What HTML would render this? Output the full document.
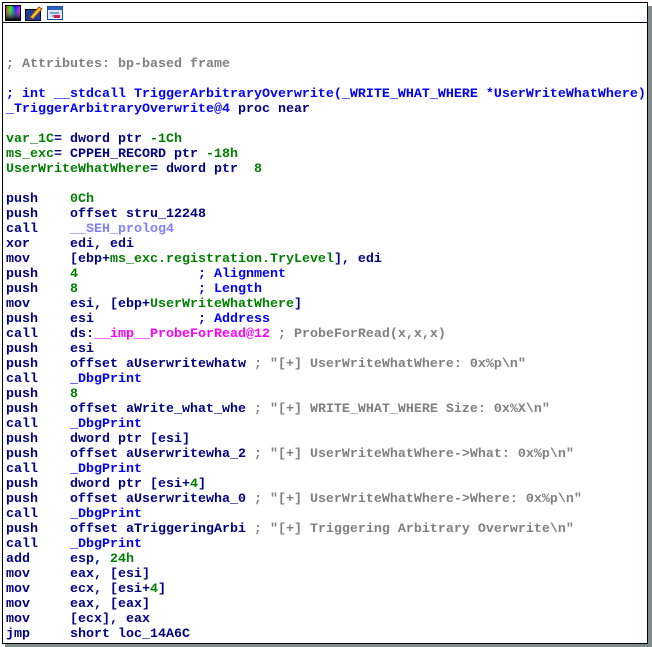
<!DOCTYPE html>
<html><head><meta charset="utf-8"><style>
html,body{margin:0;padding:0;background:#fff;width:652px;height:647px;overflow:hidden}
#shadow{position:absolute;left:5px;top:6px;width:647px;height:641px;background:#7f8c8c}
#win{position:absolute;left:2px;top:2px;width:644px;height:640px;background:#fff;border:1px solid #000}
#bar{position:absolute;left:0;top:0;width:644px;height:19px;border-bottom:1px solid #000;background:#fff}
pre{position:absolute;left:3px;top:39px;margin:0;font-family:"Liberation Mono",monospace;font-weight:bold;font-size:13.33px;line-height:15px;color:#000080;white-space:pre}
.g{color:#808080}.b{color:#0000ff}.n{color:#008000}.m{color:#ff00ff}.l{color:#8080ff}
</style></head><body>
<div id="shadow"></div>
<div id="win">
<div id="bar">
<svg width="60" height="18" style="position:absolute;left:2px;top:2px">
<defs><linearGradient id="h" x1="0" x2="1"><stop offset="0" stop-color="#f00"/><stop offset=".33" stop-color="#0f0"/><stop offset=".66" stop-color="#00f"/><stop offset="1" stop-color="#f0f"/></linearGradient>
<linearGradient id="v" x1="0" y1="0" x2="0" y2="1"><stop offset="0" stop-color="#fff" stop-opacity="0"/><stop offset="1" stop-color="#000"/></linearGradient></defs>
<rect x="0.5" y="0.5" width="15" height="15" fill="url(#h)" stroke="#000"/>
<rect x="1" y="1" width="14" height="14" fill="url(#v)"/>
<rect x="20.5" y="4.5" width="15" height="11" fill="#1c3c9c" stroke="#000"/>
<path d="M25 12 L34 2 L37 4 L28 14 Z" fill="#f0c040" stroke="#a05000"/>
<rect x="42.5" y="1.5" width="15" height="13" fill="#dfe8ff" stroke="#2050a0"/>
<rect x="43" y="2" width="14" height="3" fill="#3060c0"/>
<path d="M45 8h9M47 11h8" stroke="#2050a0"/><rect x="49" y="10" width="6" height="3" fill="#d02040"/>
</svg>
</div>
<pre>

<span class="g">; Attributes: bp-based frame</span>

<span class="b">; int __stdcall TriggerArbitraryOverwrite(_WRITE_WHAT_WHERE *UserWriteWhatWhere)</span>
<span class="b">_TriggerArbitraryOverwrite@4</span> proc near

<span class="n">var_1C</span>= dword ptr <span class="n">-1Ch</span>
<span class="n">ms_exc</span>= CPPEH_RECORD ptr <span class="n">-18h</span>
<span class="n">UserWriteWhatWhere</span>= dword ptr  <span class="n">8</span>

push    <span class="n">0Ch</span>
push    offset stru_12248
call    <span class="l">__SEH_prolog4</span>
xor     edi, edi
mov     [ebp+<span class="n">ms_exc.registration.TryLevel</span>], edi
push    <span class="n">4</span>               <span class="b">; Alignment</span>
push    <span class="n">8</span>               <span class="b">; Length</span>
mov     esi, [ebp+<span class="n">UserWriteWhatWhere</span>]
push    esi             <span class="b">; Address</span>
call    ds:<span class="m">__imp__ProbeForRead@12</span> <span class="g">; ProbeForRead(x,x,x)</span>
push    esi
push    offset aUserwritewhatw <span class="g">; "[+] UserWriteWhatWhere: 0x%p\n"</span>
call    <span class="b">_DbgPrint</span>
push    <span class="n">8</span>
push    offset aWrite_what_whe <span class="g">; "[+] WRITE_WHAT_WHERE Size: 0x%X\n"</span>
call    <span class="b">_DbgPrint</span>
push    dword ptr [esi]
push    offset aUserwritewha_2 <span class="g">; "[+] UserWriteWhatWhere-&gt;What: 0x%p\n"</span>
call    <span class="b">_DbgPrint</span>
push    dword ptr [esi+<span class="n">4</span>]
push    offset aUserwritewha_0 <span class="g">; "[+] UserWriteWhatWhere-&gt;Where: 0x%p\n"</span>
call    <span class="b">_DbgPrint</span>
push    offset aTriggeringArbi <span class="g">; "[+] Triggering Arbitrary Overwrite\n"</span>
call    <span class="b">_DbgPrint</span>
add     esp, <span class="n">24h</span>
mov     eax, [esi]
mov     ecx, [esi+<span class="n">4</span>]
mov     eax, [eax]
mov     [ecx], eax
jmp     short loc_14A6C
</pre>
</div>
</body></html>
